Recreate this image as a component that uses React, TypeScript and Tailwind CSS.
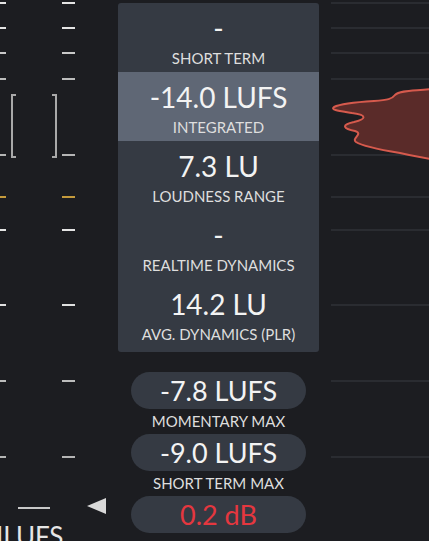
import type { ReactNode } from 'react'

// scale marks shared by the left meter and the histogram grid
const marks = [
  { y: 3, color: '#e4e4e4' },
  { y: 28, color: '#e4e4e4' },
  { y: 53, color: '#c9c9c9' },
  { y: 79, color: '#bdbdbd' },
  { y: 155, color: '#b5b5b5' },
  { y: 197, color: '#c49a3c' },
  { y: 230, color: '#e4e4e4' },
  { y: 305, color: '#e0e0e0' },
  { y: 381, color: '#bdbdbd' },
  { y: 457, color: '#b5b5b5' },
]

function Meter() {
  return (
    <div className="relative w-[118px] shrink-0">
      <svg width="118" height="541" className="block">
        {marks.map((m) => (
          <g key={m.y} fill={m.color}>
            <rect x="0" y={m.y - 1} width="6" height="2" />
            <rect x="62" y={m.y - 1} width="13" height="2" />
          </g>
        ))}
        {/* range brackets */}
        <path d="M16 95 H12 V157 H16" fill="none" stroke="#a9a9a9" strokeWidth="2" />
        <path d="M52 95 H56 V157 H52" fill="none" stroke="#a9a9a9" strokeWidth="2" />
        <rect x="18" y="507" width="32" height="2" fill="#c8c8c8" />
        <path d="M106 498 L106 514 L87 506 Z" fill="#d9d9d9" />
      </svg>
      <div className="absolute left-[-4px] top-[521px] text-[26px] leading-[30px] text-[#e6e6e6] whitespace-nowrap">
        ILUFS
      </div>
    </div>
  )
}

function Row(props: { value: string; label: string; active?: boolean }) {
  return (
    <div
      className={[
        'flex h-[69px] flex-col items-center',
        props.active ? 'bg-[#5f6775]' : '',
      ].join(' ')}
    >
      <div className="mt-[7px] h-[36px] text-[28px] leading-[36px] text-[#f3f3f3]">{props.value}</div>
      <div className="mt-[2px] h-[20px] text-[15px] leading-[20px] text-[#dedede]">{props.label}</div>
    </div>
  )
}

function Pill(props: { children: ReactNode; red?: boolean }) {
  return (
    <div
      className={[
        'flex h-[37px] w-[175px] items-center justify-center rounded-full bg-[#353a43] text-[27px] leading-none',
        props.red ? 'text-[#e5373f]' : 'text-[#f3f3f3]',
      ].join(' ')}
    >
      {props.children}
    </div>
  )
}

function Caption(props: { children: ReactNode }) {
  return <div className="flex h-[25px] items-center text-[15px] text-[#dedede]">{props.children}</div>
}

function Histogram() {
  return (
    <svg width="110" height="541" viewBox="319 0 110 541" className="block">
      {marks.map((m) => (
        <rect key={m.y} x="331" y={m.y - 1} width="98" height="2" fill="#2a2c31" />
      ))}
      <path
        d="M431 89 C416 91 400 90 395 95 C392 99 388 100 374 101 C358 102 340 104 334 107 C330 110 340 111 352 113 C368 115 366 119 354 122 C340 125 344 129 355 131 C364 134 351 138 356 142 C362 146 382 150 400 153 C414 156 424 158 431 159 Z"
        fill="#5a2b29"
        stroke="#d65a4d"
        strokeWidth="2"
      />
    </svg>
  )
}

export default function App() {
  return (
    <div className="flex h-[541px] w-[429px] overflow-hidden bg-[#1c1d21] font-['Lato','Noto_Sans',sans-serif]">
      <Meter />
      <div className="flex w-[201px] shrink-0 flex-col items-center pt-[3px]">
        <div className="w-full overflow-hidden rounded-[3px] bg-[#353a43] pb-[4px]">
          <Row value="-" label="SHORT TERM" />
          <Row value="-14.0 LUFS" label="INTEGRATED" active />
          <Row value="7.3 LU" label="LOUDNESS RANGE" />
          <Row value="-" label="REALTIME DYNAMICS" />
          <Row value="14.2 LU" label="AVG. DYNAMICS (PLR)" />
        </div>
        <div className="mt-[20px] flex flex-col items-center">
          <Pill>-7.8 LUFS</Pill>
          <Caption>MOMENTARY MAX</Caption>
          <Pill>-9.0 LUFS</Pill>
          <Caption>SHORT TERM MAX</Caption>
          <Pill red>0.2 dB</Pill>
        </div>
      </div>
      <Histogram />
    </div>
  )
}
